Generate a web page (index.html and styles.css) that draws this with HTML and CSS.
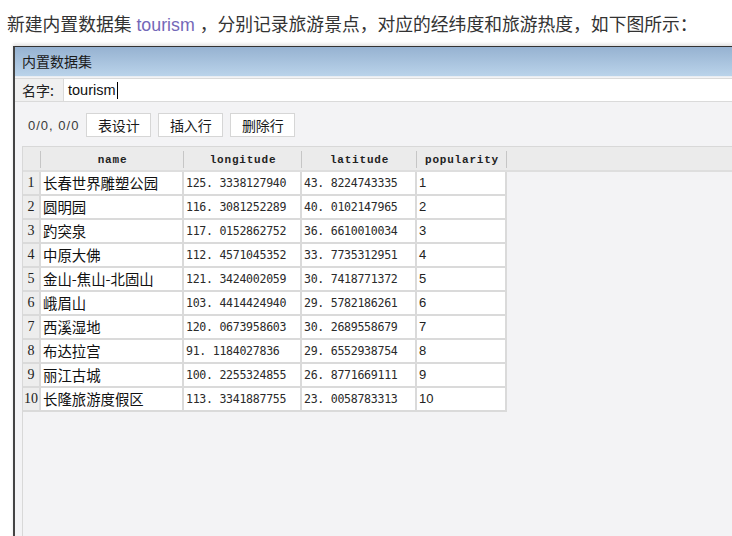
FILE: index.html
```html
<!DOCTYPE html>
<html lang="zh">
<head>
<meta charset="utf-8">
<title>内置数据集</title>
<link rel="stylesheet" href="styles.css">
</head>
<body>
<p class="intro">新建内置数据集 <span class="kw">tourism</span> ，分别记录旅游景点，对应的经纬度和旅游热度，如下图所示：</p>
<div class="window">
  <div class="titlebar">内置数据集</div>
  <div class="namerow">
    <span class="label">名字:</span>
    <div class="input">tourism<span class="caret"></span></div>
  </div>
  <div class="toolbar">
    <span class="pos">0/0, 0/0</span>
    <span class="btn">表设计</span>
    <span class="btn">插入行</span>
    <span class="btn">删除行</span>
  </div>
  <div class="grid">
    <div class="hdr">
      <div class="c rn"></div>
      <div class="c name">name</div>
      <div class="c lon">longitude</div>
      <div class="c lat">latitude</div>
      <div class="c pop">popularity</div>
    </div>
    <div class="row"><div class="c rn">1</div><div class="c name">长春世界雕塑公园</div><div class="c lon num">125.&nbsp;3338127940</div><div class="c lat num">43.&nbsp;8224743335</div><div class="c pop">1</div></div>
    <div class="row"><div class="c rn">2</div><div class="c name">圆明园</div><div class="c lon num">116.&nbsp;3081252289</div><div class="c lat num">40.&nbsp;0102147965</div><div class="c pop">2</div></div>
    <div class="row"><div class="c rn">3</div><div class="c name">趵突泉</div><div class="c lon num">117.&nbsp;0152862752</div><div class="c lat num">36.&nbsp;6610010034</div><div class="c pop">3</div></div>
    <div class="row"><div class="c rn">4</div><div class="c name">中原大佛</div><div class="c lon num">112.&nbsp;4571045352</div><div class="c lat num">33.&nbsp;7735312951</div><div class="c pop">4</div></div>
    <div class="row"><div class="c rn">5</div><div class="c name">金山-焦山-北固山</div><div class="c lon num">121.&nbsp;3424002059</div><div class="c lat num">30.&nbsp;7418771372</div><div class="c pop">5</div></div>
    <div class="row"><div class="c rn">6</div><div class="c name">峨眉山</div><div class="c lon num">103.&nbsp;4414424940</div><div class="c lat num">29.&nbsp;5782186261</div><div class="c pop">6</div></div>
    <div class="row"><div class="c rn">7</div><div class="c name">西溪湿地</div><div class="c lon num">120.&nbsp;0673958603</div><div class="c lat num">30.&nbsp;2689558679</div><div class="c pop">7</div></div>
    <div class="row"><div class="c rn">8</div><div class="c name">布达拉宫</div><div class="c lon num">91.&nbsp;1184027836</div><div class="c lat num">29.&nbsp;6552938754</div><div class="c pop">8</div></div>
    <div class="row"><div class="c rn">9</div><div class="c name">丽江古城</div><div class="c lon num">100.&nbsp;2255324855</div><div class="c lat num">26.&nbsp;8771669111</div><div class="c pop">9</div></div>
    <div class="row"><div class="c rn">10</div><div class="c name">长隆旅游度假区</div><div class="c lon num">113.&nbsp;3341887755</div><div class="c lat num">23.&nbsp;0058783313</div><div class="c pop">10</div></div>
  </div>
</div>
</body>
</html>
```
FILE: styles.css
```css
html, body {
  margin: 0;
  padding: 0;
  background: #ffffff;
  overflow: hidden;
  width: 732px;
  height: 536px;
}
body {
  font-family: "Liberation Sans", "Noto Sans CJK SC", sans-serif;
  color: #222;
}
.intro {
  margin: 0;
  padding: 13px 0 0 7px;
  font-size: 17.8px;
  line-height: 24px;
  color: #333;
  white-space: nowrap;
}
.kw {
  color: #7468b8;
}
.window {
  margin: 9px 0 0 13px;
  width: 740px;
  height: 500px;
  border-top: 1px solid #333;
  border-left: 2px solid #444;
  background: #f3f3f5;
  box-shadow: 0 -2px 3px rgba(0, 0, 0, 0.12);
  display: flex;
  flex-direction: column;
  font-family: "Noto Sans CJK SC", sans-serif;
}
.titlebar {
  height: 29px;
  line-height: 29px;
  padding-left: 7px;
  font-size: 14px;
  color: #1a1a1a;
  background: linear-gradient(#96b2d1, #bad3ea);
  border-bottom: 1px solid #e9edf2;
}
.namerow {
  margin-top: 1px;
  height: 22px;
  display: flex;
  border-top: 1px solid #dadada;
  border-bottom: 1px solid #dadada;
  background: #f0f0f0;
}
.label {
  width: 41px;
  padding-left: 7px;
  font-size: 14px;
  line-height: 22px;
  color: #222;
}
.input {
  flex: 1;
  background: #fff;
  border-left: 1px solid #dadada;
  padding-left: 4px;
  font-family: "Liberation Sans", sans-serif;
  font-size: 14.5px;
  line-height: 22px;
  color: #111;
  display: flex;
  align-items: center;
}
.caret {
  display: inline-block;
  width: 1px;
  height: 17px;
  background: #000;
  margin-left: 1px;
}
.toolbar {
  height: 24px;
  padding: 11px 0 9px 13px;
  display: flex;
  align-items: center;
  gap: 7px;
}
.pos {
  font-family: "Liberation Sans", sans-serif;
  font-size: 13px;
  letter-spacing: 1px;
  color: #3a3a3a;
  white-space: nowrap;
}
.btn {
  width: 63px;
  height: 22px;
  border: 1px solid #d6d6d6;
  background: #fff;
  font-size: 14px;
  line-height: 22px;
  text-align: center;
  color: #1a1a1a;
}
.grid {
  flex: 1;
  margin-left: 7px;
  border-top: 1px solid #d8d8d8;
  border-left: 1px solid #d8d8d8;
  background: #f3f3f5;
}
.hdr {
  height: 23px;
  background: #ebebeb;
  display: flex;
  border-bottom: 2px solid #dedede;
}
.hdr .c {
  font-family: "Liberation Mono", monospace;
  font-weight: bold;
  font-size: 11px;
  letter-spacing: 0.8px;
  line-height: 27px;
  text-align: center;
  color: #222;
  position: relative;
}
.hdr .c::after {
  content: "";
  position: absolute;
  right: 0;
  top: 4px;
  bottom: 2px;
  width: 1px;
  background: #c6c6c6;
  box-shadow: 1px 0 0 #fafafa;
}
.row {
  display: flex;
  height: 22px;
  width: max-content;
  border-bottom: 2px solid #dadada;
}
.c {
  box-sizing: border-box;
  height: 100%;
  white-space: nowrap;
  overflow: hidden;
}
.row .c {
  border-right: 2px solid #dadada;
  background: #fff;
  padding-left: 2px;
  line-height: 22px;
}
.rn { width: 18px; }
.name { width: 143px; }
.lon { width: 118px; }
.lat { width: 115px; }
.pop { width: 90px; }
.row .rn {
  background: #ededed;
  padding-left: 0;
  text-align: center;
  font-family: "Liberation Serif", serif;
  font-size: 14px;
  color: #222;
}
.row .name {
  font-family: "Noto Sans CJK SC", sans-serif;
  font-size: 14.4px;
  color: #111;
}
.row .num {
  font-family: "DejaVu Sans Mono", monospace;
  font-size: 11.6px;
  letter-spacing: -0.3px;
  color: #2a2a2a;
}
.row .pop {
  font-family: "Liberation Sans", sans-serif;
  font-size: 13px;
  color: #222;
}
```
